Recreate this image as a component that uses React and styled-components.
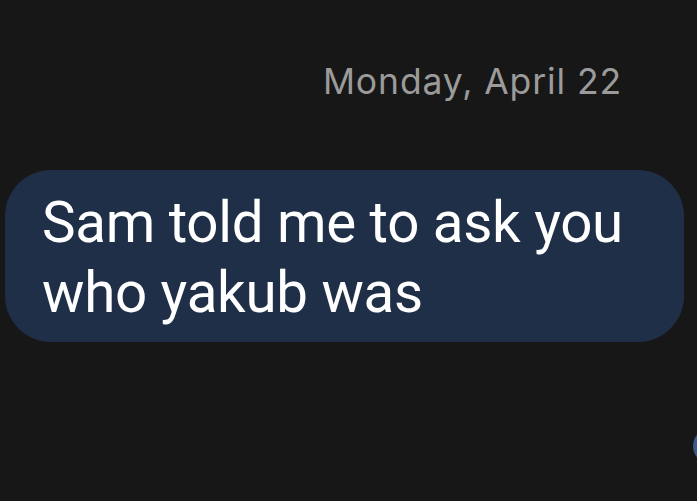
import styled, { createGlobalStyle } from 'styled-components';

const GlobalStyle = createGlobalStyle`
    html, body {
        margin: 0;
        padding: 0;
        background: #171717;
        overflow: hidden;
    }
`;

export default function App() {
    return (
        <>
            <GlobalStyle />
            <Screen>
                <DateLabel>Monday, April 22</DateLabel>
                <Bubble>
                    Sam told me to ask you<br />
                    who yakub was
                </Bubble>
                <EdgeButton />
            </Screen>
        </>
    );
};

const Screen = styled.div`
    position: relative;
    width: 697px;
    height: 501px;
    overflow: hidden;
    background: #171717;
    display: flex;
    flex-direction: column;
    font-family: Roboto, "Liberation Sans", sans-serif;
`;

const DateLabel = styled.div`
    align-self: flex-end;
    margin: 60px 75px 0 0;
    color: #9b9b9b;
    font-family: Inter, Roboto, sans-serif;
    font-size: 35.5px;
    letter-spacing: 0.9px;
    line-height: 44px;
`;

const Bubble = styled.div`
    margin: 66px 13px 0 5px;
    height: 172px;
    box-sizing: border-box;
    padding: 18px 37px 0;
    background: #1f2f47;
    border-radius: 46px;
    color: #ffffff;
    font-size: 56.5px;
    letter-spacing: -0.3px;
    line-height: 70px;
`;

const EdgeButton = styled.div`
    position: absolute;
    right: -40px;
    top: 428px;
    width: 44px;
    height: 36px;
    border-radius: 18px;
    background: #3a5a8c;
`;
